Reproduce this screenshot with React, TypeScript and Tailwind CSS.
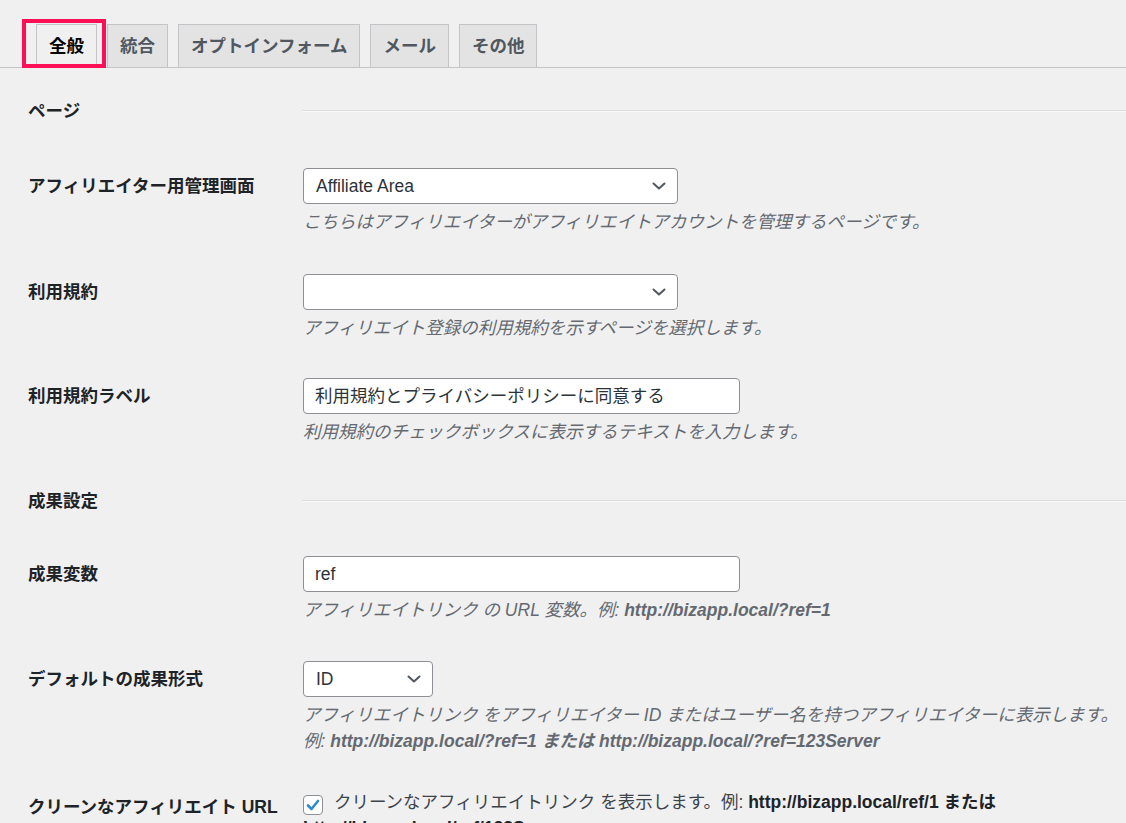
import type { ReactNode } from "react";

const FONT = "font-['Liberation_Sans','Noto_Sans_CJK_JP',sans-serif]";

const tabs = ["全般", "統合", "オプトインフォーム", "メール", "その他"];

function Chevron() {
  return (
    <svg width="14" height="8" viewBox="0 0 14 8" className="shrink-0">
      <polyline points="1.5,1.5 7,6.5 12.5,1.5" fill="none" stroke="#50575e" strokeWidth="2" strokeLinecap="round" strokeLinejoin="round" />
    </svg>
  );
}

function Select({ value, width }: { value: string; width: string }) {
  return (
    <div className={`${width} h-[36px] flex items-center justify-between pl-[12px] pr-[11px] bg-white border border-[#8c8f94] rounded-[4px] text-[17.5px] text-[#2c3338]`}>
      <span>{value}</span>
      <Chevron />
    </div>
  );
}

function Input({ value }: { value: string }) {
  return (
    <div className="w-[437px] h-[36px] flex items-center px-[11px] bg-white border border-[#8c8f94] rounded-[4px] text-[17.5px] text-[#2c3338]">
      {value}
    </div>
  );
}

function Desc({ children }: { children: ReactNode }) {
  return <p className="mt-[5px] text-[17.5px] leading-[26px] italic text-[#646970] whitespace-nowrap">{children}</p>;
}

function Row({ label, h, children }: { label: string; h: string; children: ReactNode }) {
  return (
    <div className={`flex ${h}`}>
      <div className="w-[275px] shrink-0 pt-[24px] text-[17.5px] leading-[25px] font-bold text-[#1d2327]">{label}</div>
      <div className="flex-1 pt-[18px]">{children}</div>
    </div>
  );
}

function Section({ label, h }: { label: string; h: string }) {
  return (
    <div className={`flex ${h}`}>
      <div className="w-[274px] shrink-0 pt-[31px] text-[17.5px] leading-[25px] font-bold text-[#1d2327]">{label}</div>
      <div className="flex-1 pt-[42px]">
        <div className="h-[2px] border-t border-b border-t-[#dcdcde] border-b-[#fafafa]" />
      </div>
    </div>
  );
}

export default function App() {
  return (
    <div className={`${FONT} min-h-screen w-full bg-[#f0f0f1] overflow-hidden`}>
      {/* Tabs */}
      <div className="flex items-end h-[68px] pl-[28px] border-b border-[#c3c4c7]">
        {tabs.map((t, i) =>
          i === 0 ? (
            <div key={t} className="relative ml-[8px] -mb-px">
              <div className="h-[44px] px-[12px] flex items-center border border-[#c3c4c7] border-b-[#f0f0f1] bg-[#f0f0f1] text-[17.5px] font-bold text-black">
                {t}
              </div>
              <div className="absolute -left-[14px] -right-[9px] -top-[5px] bottom-0 border-[4px] border-[#ff0f55]" />
            </div>
          ) : (
            <div
              key={t}
              className="h-[44px] -mb-px ml-[10px] px-[12px] flex items-center border border-[#c3c4c7] bg-[#e3e3e4] text-[17.5px] font-bold text-[#50575e]"
            >
              {t}
            </div>
          )
        )}
      </div>

      <div className="pl-[28px]">
        <Section label="ページ" h="h-[82px]" />

        <Row label="アフィリエイター用管理画面" h="h-[106px]">
          <Select value="Affiliate Area" width="w-[375px]" />
          <Desc>こちらはアフィリエイターがアフィリエイトアカウントを管理するページです。</Desc>
        </Row>

        <Row label="利用規約" h="h-[104px]">
          <Select value="" width="w-[375px]" />
          <Desc>アフィリエイト登録の利用規約を示すページを選択します。</Desc>
        </Row>

        <Row label="利用規約ラベル" h="h-[98px]">
          <Input value="利用規約とプライバシーポリシーに同意する" />
          <Desc>利用規約のチェックボックスに表示するテキストを入力します。</Desc>
        </Row>

        <Section label="成果設定" h="h-[80px]" />

        <Row label="成果変数" h="h-[105px]">
          <Input value="ref" />
          <Desc>
            アフィリエイトリンク の URL 変数。例: <strong className="font-bold">http://bizapp.local/?ref=1</strong>
          </Desc>
        </Row>

        <Row label="デフォルトの成果形式" h="h-[128px]">
          <Select value="ID" width="w-[130px]" />
          <Desc>アフィリエイトリンク をアフィリエイター ID またはユーザー名を持つアフィリエイターに表示します。</Desc>
          <p className="text-[17.5px] leading-[26px] italic text-[#646970] whitespace-nowrap">
            例: <strong className="font-bold">http://bizapp.local/?ref=1 または http://bizapp.local/?ref=123Server</strong>
          </p>
        </Row>

        <Row label="クリーンなアフィリエイト URL" h="h-[120px]">
          <p className="text-[17.5px] leading-[26px] text-[#3c434a] pr-[10px]">
            <span className="inline-flex items-center justify-center align-[-4px] w-[20px] h-[20px] mr-[11px] bg-white border border-[#8c8f94] rounded-[4px]">
              <svg width="14" height="14" viewBox="0 0 14 14">
                <path d="M2 7.5 L5.5 11 L12 3" fill="none" stroke="#2f8ad0" strokeWidth="2.6" strokeLinecap="round" strokeLinejoin="round" />
              </svg>
            </span>
            クリーンなアフィリエイトリンク を表示します。例: <strong className="font-bold text-[#1d2327]">http://bizapp.local/ref/1 または</strong>{" "}
            <strong className="font-bold text-[#1d2327]">http://bizapp.local/ref/123Server</strong>
          </p>
        </Row>
      </div>
    </div>
  );
}
